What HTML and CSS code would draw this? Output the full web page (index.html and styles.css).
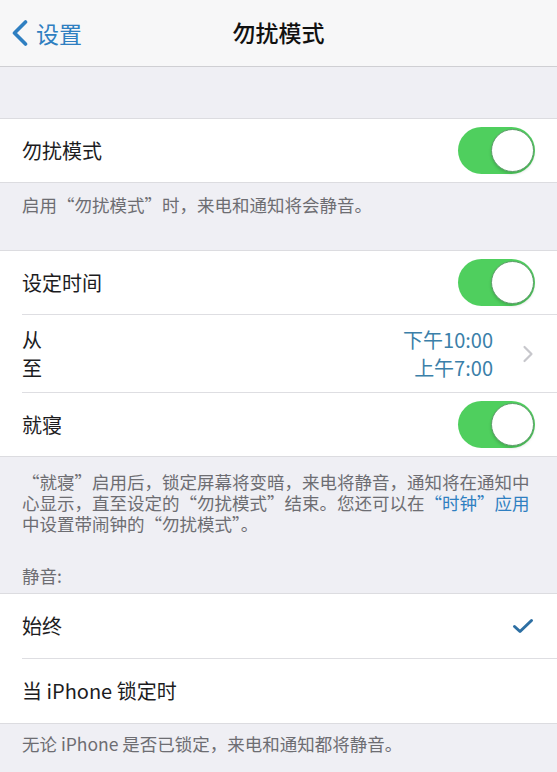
FILE: index.html
```html
<!DOCTYPE html>
<html lang="zh-CN">
<head>
<meta charset="utf-8">
<title>勿扰模式</title>
<link rel="stylesheet" href="styles.css">
</head>
<body>
<div class="screen">
  <header class="nav">
    <div class="back">
      <svg class="chev" width="18" height="26" viewBox="0 0 18 26"><path d="M14.5 2 L3.5 13 L14.5 24" fill="none" stroke="#2f7fc1" stroke-width="3.6" stroke-linecap="round" stroke-linejoin="round"/></svg>
      <span class="back-text">设置</span>
    </div>
    <div class="title">勿扰模式</div>
    <div class="nav-spacer"></div>
  </header>

  <div class="gap-top"></div>

  <section class="group">
    <div class="row">
      <div class="row-inner">
        <span class="label">勿扰模式</span>
        <span class="toggle"><span class="knob"></span></span>
      </div>
    </div>
  </section>

  <div class="footer f1">启用“勿扰模式”时，来电和通知将会静音。</div>

  <section class="group">
    <div class="row">
      <div class="row-inner sep">
        <span class="label">设定时间</span>
        <span class="toggle"><span class="knob"></span></span>
      </div>
    </div>
    <div class="row">
      <div class="row-inner sep tall">
        <div class="stack">
          <span class="label">从</span>
          <span class="label">至</span>
        </div>
        <div class="times">
          <div class="stack right">
            <span class="time">下午10:00</span>
            <span class="time">上午7:00</span>
          </div>
          <svg class="disclosure" width="12" height="18" viewBox="0 0 12 18"><path d="M2.5 2 L9.5 9 L2.5 16" fill="none" stroke="#c7c7cc" stroke-width="2.2" stroke-linecap="round" stroke-linejoin="round"/></svg>
        </div>
      </div>
    </div>
    <div class="row">
      <div class="row-inner">
        <span class="label">就寝</span>
        <span class="toggle"><span class="knob"></span></span>
      </div>
    </div>
  </section>

  <div class="footer f2">
    <p class="note">“就寝”启用后，锁定屏幕将变暗，来电将静音，通知将在通知中<br>心显示，直至设定的“勿扰模式”结束。您还可以在<span class="link">“时钟”应用</span><br>中设置带闹钟的“勿扰模式”。</p>
    <p class="header">静音:</p>
  </div>

  <section class="group">
    <div class="row">
      <div class="row-inner sep big">
        <span class="label">始终</span>
        <svg class="check" width="22" height="16" viewBox="0 0 22 16"><path d="M2.5 8.5 L8 13.5 L19.5 2.5" fill="none" stroke="#2d6fa3" stroke-width="3" stroke-linecap="round" stroke-linejoin="round"/></svg>
      </div>
    </div>
    <div class="row">
      <div class="row-inner big">
        <span class="label">当 iPhone 锁定时</span>
      </div>
    </div>
  </section>

  <div class="footer f3">无论 iPhone 是否已锁定，来电和通知都将静音。</div>
</div>
</body>
</html>
```

FILE: styles.css
```css
html, body {
  margin: 0;
  padding: 0;
}
body {
  background: #efeff4;
  font-family: "Noto Sans CJK SC", "Noto Sans", sans-serif;
  color: #1c1c1e;
}
.screen {
  width: 557px;
  height: 772px;
  overflow: hidden;
  display: flex;
  flex-direction: column;
}
.nav {
  height: 66px;
  flex: none;
  background: #f7f7f8;
  border-bottom: 1px solid #cfcfd3;
  display: grid;
  grid-template-columns: 1fr auto 1fr;
  align-items: center;
}
.back {
  display: flex;
  align-items: center;
  padding-left: 11px;
  color: #2f7fc1;
}
.chev {
  display: block;
}
.back-text {
  font-size: 23px;
  line-height: 30px;
  margin-left: 7px;
  margin-top: -1px;
}
.title {
  font-size: 23px;
  font-weight: 500;
  line-height: 30px;
  margin-top: -2px;
  color: #111;
}
.gap-top {
  height: 51px;
  flex: none;
}
.group {
  background: #fff;
  border-top: 1px solid #dcdce0;
  border-bottom: 1px solid #dcdce0;
  flex: none;
}
.row {
  padding-left: 22px;
}
.row-inner {
  height: 63px;
  display: flex;
  align-items: center;
  justify-content: space-between;
  padding-right: 22px;
}
.row-inner.big {
  height: 64px;
}
.row-inner.sep {
  border-bottom: 1px solid #dedee2;
}
.row-inner.tall {
  height: 77px;
  padding-right: 23px;
}
.label {
  font-size: 20px;
  line-height: 28px;
  color: #1c1c1e;
}
.stack {
  display: flex;
  flex-direction: column;
}
.stack.right {
  align-items: flex-end;
}
.times {
  display: flex;
  align-items: center;
  gap: 29px;
}
.time {
  font-size: 20px;
  line-height: 28px;
  color: #3b7fa9;
}
.disclosure {
  display: block;
}
.toggle {
  width: 77px;
  height: 47px;
  border-radius: 24px;
  background: #4fcf5e;
  display: flex;
  align-items: center;
  justify-content: flex-end;
  padding-right: 1px;
  box-sizing: border-box;
}
.knob {
  width: 43px;
  height: 43px;
  border-radius: 50%;
  background: #fff;
  border: 1.5px solid #5e9c6a;
  box-sizing: border-box;
  box-shadow: 0 2px 3px rgba(0, 0, 0, 0.15);
}
.check {
  display: block;
  margin-right: 1px;
}
.footer {
  flex: none;
  padding-left: 22px;
  font-size: 17.5px;
  color: #6d6d72;
}
.f1 {
  height: 67px;
  box-sizing: border-box;
  padding-top: 11px;
  line-height: 22px;
}
.f2 {
  height: 136px;
  box-sizing: border-box;
  padding-top: 14px;
}
.note {
  margin: 0;
  line-height: 21px;
  white-space: nowrap;
}
.link {
  color: #2f7fc1;
}
.header {
  margin: 31px 0 0;
  line-height: 21px;
}
.f3 {
  padding-top: 9px;
  line-height: 22px;
}
```
